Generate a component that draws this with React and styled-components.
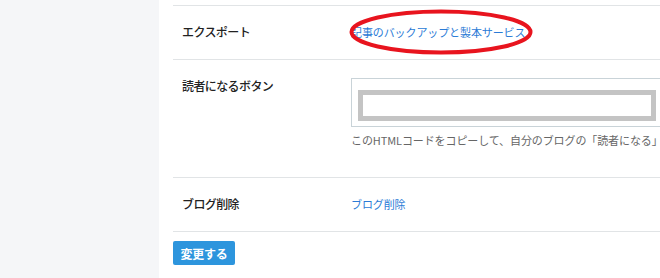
import styled, { createGlobalStyle } from 'styled-components'

const GlobalStyle = createGlobalStyle`
  html, body {
    margin: 0;
    padding: 0;
    background: #ffffff;
    overflow: hidden;
  }
  body {
    font-family: "Noto Sans CJK JP", "Liberation Sans", sans-serif;
  }
`

function App() {
  return (
    <>
      <GlobalStyle />
      <Page>
        <Sidebar />
        <Main>
          <SettingsTable>
            <Row>
              <Label>エクスポート</Label>
              <Value>
                <Marked>
                  <Link href="#">記事のバックアップと製本サービス</Link>
                  <Circle viewBox="0 0 186 46" width="186" height="46">
                    <ellipse cx="93" cy="23" rx="89.5" ry="20.5" fill="none" stroke="#e8141e" strokeWidth="4" />
                  </Circle>
                </Marked>
              </Value>
            </Row>
            <Row $tall>
              <Label>読者になるボタン</Label>
              <Value>
                <CodeBox>
                  <Preview />
                </CodeBox>
                <Help>
                  このHTMLコードをコピーして、自分のブログの「読者になる」ボタンを表示したい場所に貼り付けてください。
                </Help>
              </Value>
            </Row>
            <Row>
              <Label>ブログ削除</Label>
              <Value>
                <Link href="#">ブログ削除</Link>
              </Value>
            </Row>
          </SettingsTable>
          <SubmitButton>変更する</SubmitButton>
        </Main>
      </Page>
    </>
  )
}

export default App

const Page = styled.div`
  display: flex;
  width: 660px;
  height: 278px;
  overflow: hidden;
`

const Sidebar = styled.div`
  width: 159px;
  flex-shrink: 0;
  background: #f5f6f8;
`

const Main = styled.div`
  flex: 1;
  padding: 5px 0 0 14px;
  min-width: 0;
`

const SettingsTable = styled.div`
  border-bottom: 1px solid #e1e4e6;
  width: 560px;
`

const Row = styled.div`
  display: flex;
  border-top: 1px solid #e1e4e6;
  padding: ${(p) => (p.$tall ? '18px 0 29px' : '18px 0 19px')};
`

const Label = styled.div`
  width: 178px;
  flex-shrink: 0;
  padding-left: 9px;
  box-sizing: border-box;
  font-size: 12px;
  font-weight: 500;
  line-height: 16px;
  letter-spacing: -0.6px;
  color: #222222;
`

const Value = styled.div`
  flex: 1;
  min-width: 0;
`

const Marked = styled.div`
  position: relative;
  width: fit-content;
`

const Link = styled.a`
  display: block;
  font-size: 11px;
  line-height: 16px;
  letter-spacing: -0.1px;
  color: #2b7bd6;
  text-decoration: none;
  white-space: nowrap;
`

const Circle = styled.svg`
  position: absolute;
  left: -3px;
  top: -15px;
  pointer-events: none;
`

const CodeBox = styled.div`
  width: 320px;
  height: 49px;
  box-sizing: border-box;
  border: 1px solid #c9d3d8;
  padding: 11px 0 0 6px;
`

const Preview = styled.div`
  width: 298px;
  height: 31px;
  box-sizing: border-box;
  border: 5px solid #c4c4c4;
  background: #ffffff;
`

const Help = styled.p`
  margin: 5px 0 0;
  font-size: 11px;
  line-height: 16px;
  letter-spacing: -0.1px;
  color: #666666;
  white-space: nowrap;
`

const SubmitButton = styled.button`
  margin-top: 9px;
  width: 62px;
  height: 24px;
  border: none;
  border-radius: 2px;
  background: #2d95dd;
  color: #ffffff;
  font-family: "Noto Sans CJK JP", "Liberation Sans", sans-serif;
  font-size: 12px;
  font-weight: 700;
  padding: 0;
  letter-spacing: -0.3px;
`
